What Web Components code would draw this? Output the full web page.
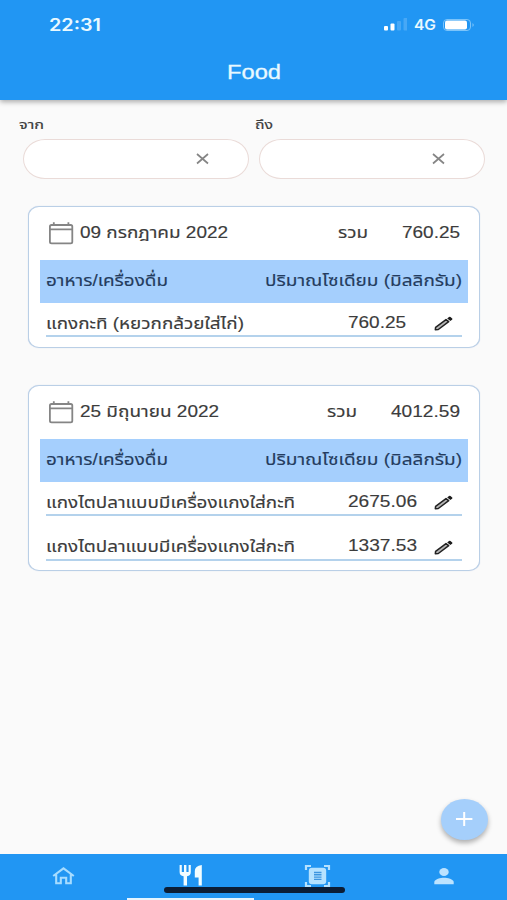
<!DOCTYPE html>
<html lang="th">
<head>
<meta charset="utf-8">
<title>Food</title>
<style>
  body {
    margin: 0;
    background: #fafafa;
    font-family: "Liberation Sans", "Noto Sans Thai", "Noto Sans Thai Looped", sans-serif;
    color: #3c3c3c;
  }
</style>
</head>
<body>
<food-app></food-app>

<script>
// Single line of text stretched to a given width
class FitText extends HTMLElement {
  constructor() {
    super();
    this.attachShadow({ mode: "open" });
  }

  connectedCallback() {
    const width = Number(this.getAttribute("w"));
    this.shadowRoot.innerHTML = `
      <style>
        :host { display: block; flex: none; width: ${width}px; white-space: nowrap; }
        span { display: inline-block; transform-origin: 0 50%; }
      </style>
      <span><slot></slot></span>
    `;
    const span = this.shadowRoot.querySelector("span");
    span.style.transform = `scaleX(${width / span.getBoundingClientRect().width})`;
  }
}
customElements.define("fit-text", FitText);

const ICONS = {
  calendar: `<g fill="none" stroke="#858585" stroke-width="1.8"><rect x=".9" y="3" width="22.4" height="18.4" rx="1.6"/><path d="M1 7.4h22M4.800 0.300v2.700M19.400 .3v2.700"/></g>`,
  close: `<path d="M1 1l11 9.500M12 1L1 10.500" fill="none" stroke="#858585" stroke-width="1.7"/>`,
  pencil: `<path d="M1.300 13.800l.3-2.500L12 3.600l2.700 2.100L4.300 13.500z" fill="#b5b5b5" stroke="#222" stroke-width="1.500" stroke-linejoin="round"/><path d="M13.200 2.400l1.800-1.400q.8-.5 1.500 0l1.700 1.400q.6.600 0 1.200L16.400 4.900z" fill="#1c1c1c"/>`,
  home: `<path d="M1.200 9L11.500 1.300 21.800 9M4.200 7.500v8.700h4.600v-5.500h5.400v5.500h4.600V7.500" fill="none" stroke="#a6dcff" stroke-width="2.100"/>`,
  food: `<path d="M.6 0h2.200v7h2.200V0h2.400v7h2.200V0h2.200v7q0 3.800-3.800 4.300V20.500H4.600V11.300Q.6 10.800.6 7zM22.800 0v20.500h-3.200v-8h-3.800V6Q15.800.8 22.800 0z" fill="#f2fdff"/>`,
  scan: `<path d="M1 5V1h5M19 1h5v4M24 17v4h-5M6 21H1v-4" fill="none" stroke="#b5e2ff" stroke-width="2.200"/><rect x="3.800" y="2.800" width="17.400" height="16.400" rx="3" fill="#b5e2ff"/><path d="M9 7.500h7.500M9 9.800h7.500M9 12.100h7.500M9 14.400h7.500" stroke="#3c95df" stroke-width="1.400"/>`,
  person: `<circle cx="10" cy="4" r="4" transform="matrix(1.180 0 0 1 -1.800 0)" fill="#bce3ff"/><path d="M.3 16.200v-2.200c0-2.700 6.400-4.200 9.700-4.200s9.700 1.500 9.700 4.200v2.200z" fill="#bce3ff"/>`,
  plus: `<path d="M8.200 0v14M0 7h16.400" stroke="#fff" stroke-width="2"/>`,
};

class AppIcon extends HTMLElement {
  constructor() {
    super();
    this.attachShadow({ mode: "open" });
  }

  connectedCallback() {
    const [width, height] = this.getAttribute("size").split("x");
    this.shadowRoot.innerHTML = `
      <style>
        :host { display: block; flex: none; width: ${width}px; height: ${height}px; }
        svg { display: block; overflow: visible; }
      </style>
      <svg width="${width}" height="${height}" viewBox="0 0 ${width} ${height}">${ICONS[this.getAttribute("name")]}</svg>
    `;
  }
}
customElements.define("app-icon", AppIcon);

class AppHeader extends HTMLElement {
  constructor() {
    super();
    this.attachShadow({ mode: "open" });
  }

  connectedCallback() {
    this.shadowRoot.innerHTML = `
      <style>
        :host {
          display: block;
          height: 100px;
          background: #2196f3;
          color: #e9f9ff;
          box-shadow: 0 2px 5px rgba(0, 0, 0, .32);
        }
        .status {
          display: flex;
          align-items: center;
          height: 49px;
          padding: 0 32px 0 49px;
          font: 600 17px/20px Inter, sans-serif;
        }
        .network { font-size: 14px; margin-right: 7px; }
        .signal { margin: 0 7px 0 auto; }
        .title {
          display: flex;
          justify-content: center;
          font-size: 20px;
          line-height: 46px;
          -webkit-text-stroke: .3px;
        }
      </style>
      <div class="status">
        <fit-text w="52">22:31</fit-text>
        <svg class="signal" width="23" height="13">
          <rect x="0" y="8" width="4" height="4.500" rx="1" fill="#fff"/>
          <rect x="6.500" y="5.500" width="4" height="7" rx="1" fill="#fff"/>
          <rect x="13" y="3" width="4" height="9.500" rx="1" fill="#47a8f6"/>
          <rect x="19.500" y="0" width="4" height="12.500" rx="1" fill="#47a8f6"/>
        </svg>
        <fit-text class="network" w="22">4G</fit-text>
        <svg width="32" height="12">
          <rect x=".5" y=".5" width="27" height="11" rx="3.500" fill="none" stroke="#7cc4fa"/>
          <rect x="2" y="1.500" width="22" height="9" rx="2" fill="#fff"/>
          <path d="M29.500 4q2.500 2 0 4z" fill="#7cc4fa"/>
        </svg>
      </div>
      <div class="title"><fit-text w="54">Food</fit-text></div>
    `;
  }
}
customElements.define("app-header", AppHeader);

class DateField extends HTMLElement {
  constructor() {
    super();
    this.attachShadow({ mode: "open" });
  }

  connectedCallback() {
    this.shadowRoot.innerHTML = `
      <style>
        :host { display: block; width: 235.500px; font-size: 13px; line-height: 20px; }
        .field {
          box-sizing: border-box;
          display: flex;
          align-items: center;
          justify-content: flex-end;
          width: 226px;
          height: 39.500px;
          margin: 4px 0 0 4px;
          padding-right: 39px;
          background: #fff;
          border: 1.500px solid #eadbd8;
          border-radius: 22px / 20px;
        }
        fit-text { -webkit-text-stroke: .2px; }
      </style>
      <fit-text w="${this.getAttribute("label-width")}">${this.getAttribute("label")}</fit-text>
      <div class="field"><app-icon name="close" size="13x11.5"></app-icon></div>
    `;
  }
}
customElements.define("date-field", DateField);

class FoodRow extends HTMLElement {
  constructor() {
    super();
    this.attachShadow({ mode: "open" });
  }

  connectedCallback() {
    this.shadowRoot.innerHTML = `
      <style>
        :host {
          box-sizing: border-box;
          display: grid;
          grid-template-columns: 302px 86px auto;
          align-items: center;
          height: 27.500px;
          margin: 0 6px;
          border-bottom: 2px solid #b4d2ec;
        }
        ::slotted(fit-text) { margin-top: 2px; }
        app-icon { margin-top: 2px; }
      </style>
      <slot></slot>
      <fit-text w="${this.getAttribute("amount-width")}">${this.getAttribute("amount")}</fit-text>
      <app-icon name="pencil" size="19x15"></app-icon>
    `;
  }
}
customElements.define("food-row", FoodRow);

class DayCard extends HTMLElement {
  constructor() {
    super();
    this.attachShadow({ mode: "open" });
  }

  connectedCallback() {
    const attr = (name) => this.getAttribute(name);
    this.shadowRoot.innerHTML = `
      <style>
        :host {
          box-sizing: border-box;
          display: block;
          width: 452.500px;
          margin-left: 27.500px;
          padding: 0 11px 9.500px;
          background: #fff;
          border: 1.500px solid #bacfe6;
          border-radius: 11px / 10px;
          box-shadow: 0 0 1px #c3cfe6;
          font-size: 16px;
          line-height: 24px;
          -webkit-text-stroke: .15px;
        }
        .day { display: flex; align-items: center; height: 53.500px; padding: 0 8px 0 9px; }
        .day fit-text { margin-top: -1px; }
        .day .date { margin-left: 7px; }
        .day .sum { margin-left: auto; }
        .day .total { margin-left: 34px; }
        .head {
          display: flex;
          align-items: center;
          justify-content: space-between;
          height: 42.500px;
          padding: 0 6px;
          background: #a5cffd;
          color: #243c5e;
        }
        .rows { display: flex; flex-direction: column; gap: 17px; padding-top: 7px; }
      </style>
      <div class="day">
        <app-icon name="calendar" size="24x22"></app-icon>
        <fit-text class="date" w="${attr("date-width")}">${attr("date")}</fit-text>
        <fit-text class="sum" w="30">รวม</fit-text>
        <fit-text class="total" w="${attr("total-width")}">${attr("total")}</fit-text>
      </div>
      <div class="head">
        <fit-text w="122">อาหาร/เครื่องดื่ม</fit-text>
        <fit-text w="197">ปริมาณโซเดียม (มิลลิกรัม)</fit-text>
      </div>
      <div class="rows"><slot></slot></div>
    `;
  }
}
customElements.define("day-card", DayCard);

class AddButton extends HTMLElement {
  constructor() {
    super();
    this.attachShadow({ mode: "open" });
  }

  connectedCallback() {
    this.shadowRoot.innerHTML = `
      <style>
        :host {
          display: flex;
          align-items: center;
          justify-content: center;
          width: 47px;
          height: 40.500px;
          border-radius: 50%;
          background: #a5cffb;
          box-shadow: 0 3px 5px rgba(0, 0, 0, .3);
        }
      </style>
      <app-icon name="plus" size="16.400x14"></app-icon>
    `;
  }
}
customElements.define("add-button", AddButton);

class TabBar extends HTMLElement {
  constructor() {
    super();
    this.attachShadow({ mode: "open" });
  }

  connectedCallback() {
    this.shadowRoot.innerHTML = `
      <style>
        :host { display: block; position: relative; height: 46.500px; background: #2196f3; }
        nav { display: grid; grid-template-columns: repeat(4, 1fr); height: 100%; }
        .tab {
          box-sizing: border-box;
          display: flex;
          align-items: center;
          justify-content: center;
          padding-left: 1px;
          border-bottom: 2px solid transparent;
        }
        .active { border-color: #e4f5ff; }
        .handle {
          position: absolute;
          left: 163.500px;
          top: 33.500px;
          width: 181px;
          height: 5.500px;
          border-radius: 3px;
          background: #0b1d35;
        }
      </style>
      <nav>
        <div class="tab"><app-icon name="home" size="23x17"></app-icon></div>
        <div class="tab active"><app-icon name="food" size="24x21"></app-icon></div>
        <div class="tab"><app-icon name="scan" size="25x22"></app-icon></div>
        <div class="tab"><app-icon name="person" size="20x16.500"></app-icon></div>
      </nav>
      <div class="handle"></div>
    `;
  }
}
customElements.define("tab-bar", TabBar);

class FoodApp extends HTMLElement {
  constructor() {
    super();
    this.attachShadow({ mode: "open" });
  }

  connectedCallback() {
    this.shadowRoot.innerHTML = `
      <style>
        :host { display: flex; flex-direction: column; height: 900px; overflow: hidden; }
        main { flex: 1; }
        .filters { display: flex; padding: 15px 0 0 19px; margin-bottom: 27px; }
        day-card + day-card { margin-top: 37px; }
        add-button { position: absolute; left: 441px; top: 799px; }
      </style>
      <app-header></app-header>
      <main>
        <div class="filters">
          <date-field label="จาก" label-width="25"></date-field>
          <date-field label="ถึง" label-width="18"></date-field>
        </div>
        <day-card date="09 กรกฎาคม 2022" date-width="148" total="760.25" total-width="58">
          <food-row amount="760.25" amount-width="58"><fit-text w="198">แกงกะทิ (หยวกกล้วยใส่ไก่)</fit-text></food-row>
        </day-card>
        <day-card date="25 มิถุนายน 2022" date-width="139" total="4012.59" total-width="69">
          <food-row amount="2675.06" amount-width="69"><fit-text w="249">แกงไตปลาแบบมีเครื่องแกงใส่กะทิ</fit-text></food-row>
          <food-row amount="1337.53" amount-width="69"><fit-text w="249">แกงไตปลาแบบมีเครื่องแกงใส่กะทิ</fit-text></food-row>
        </day-card>
      </main>
      <add-button></add-button>
      <tab-bar></tab-bar>
    `;
  }
}
customElements.define("food-app", FoodApp);
</script>
</body>
</html>
